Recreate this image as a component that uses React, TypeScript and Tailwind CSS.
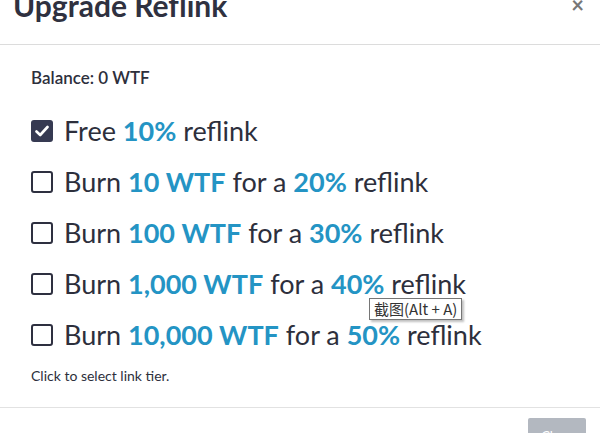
import React from "react";

const Check = ({ checked }: { checked: boolean }) =>
  checked ? (
    <span className="flex h-[22px] w-[22px] items-center justify-center rounded-[3px] bg-[#363a52]">
      <svg width="14" height="12" viewBox="0 0 14 12" fill="none">
        <path d="M1.5 6.5 L5.2 10 L12.5 2" stroke="white" strokeWidth="2.6" strokeLinecap="round" strokeLinejoin="round" />
      </svg>
    </span>
  ) : (
    <span className="h-[22px] w-[22px] rounded-[3px] border-2 border-[#2e3040] bg-white" />
  );

const B = ({ children }: { children: React.ReactNode }) => (
  <span className="font-bold text-[#2494c4]">{children}</span>
);

export default function App() {
  const rows: { checked: boolean; content: React.ReactNode }[] = [
    { checked: true, content: <>Free <B>10%</B> reflink</> },
    { checked: false, content: <>Burn <B>10 WTF</B> for a <B>20%</B> reflink</> },
    { checked: false, content: <>Burn <B>100 WTF</B> for a <B>30%</B> reflink</> },
    { checked: false, content: <>Burn <B>1,000 WTF</B> for a <B>40%</B> reflink</> },
    { checked: false, content: <>Burn <B>10,000 WTF</B> for a <B>50%</B> reflink</> },
  ];
  return (
    <div className="relative h-[433px] w-[600px] overflow-hidden bg-white text-[#2d2f3c]" style={{ fontFamily: "Lato, 'Noto Sans', sans-serif" }}>
      <div className="flex h-[45px] items-start justify-between border-b border-[#dcdcdc] pl-[13px] pr-[16px]">
        <h1 className="mt-[-13px] text-[30px] font-bold leading-[36px] text-[#2f3140]">Upgrade Reflink</h1>
        <span className="mt-[-6px] text-[22px] font-bold leading-[22px] text-[#777]">×</span>
      </div>
      <div className="px-[31px] pt-[22px]">
        <div className="text-[17px] font-semibold leading-[22px]">Balance: 0 WTF</div>
        <div className="mt-[16px] flex flex-col">
          {rows.map((r, i) => (
            <div key={i} className="flex h-[51px] items-center gap-[11px]">
              <Check checked={r.checked} />
              <span className="text-[27px] leading-[32px]">{r.content}</span>
            </div>
          ))}
        </div>
        <div className="mt-[7px] text-[14px] leading-[18px]">Click to select link tier.</div>
      </div>
      <div className="absolute left-0 right-0 top-[407px] flex justify-end border-t border-[#e2e2e2] pr-[14px] pt-[10px]">
        <div className="h-[30px] w-[58px] rounded-[2px] bg-[#b3b8c0] pt-[9px] text-center text-[13px] text-white">Close</div>
      </div>
      <div
        className="absolute left-[369px] top-[298px] border border-[#767676] bg-white px-[4px] text-[15px] leading-[20px] text-[#333] shadow-[2px_2px_2px_rgba(0,0,0,0.25)]"
        style={{ fontFamily: "'Noto Sans CJK SC', 'Noto Sans', sans-serif" }}
      >
        截图(Alt + A)
      </div>
    </div>
  );
}
